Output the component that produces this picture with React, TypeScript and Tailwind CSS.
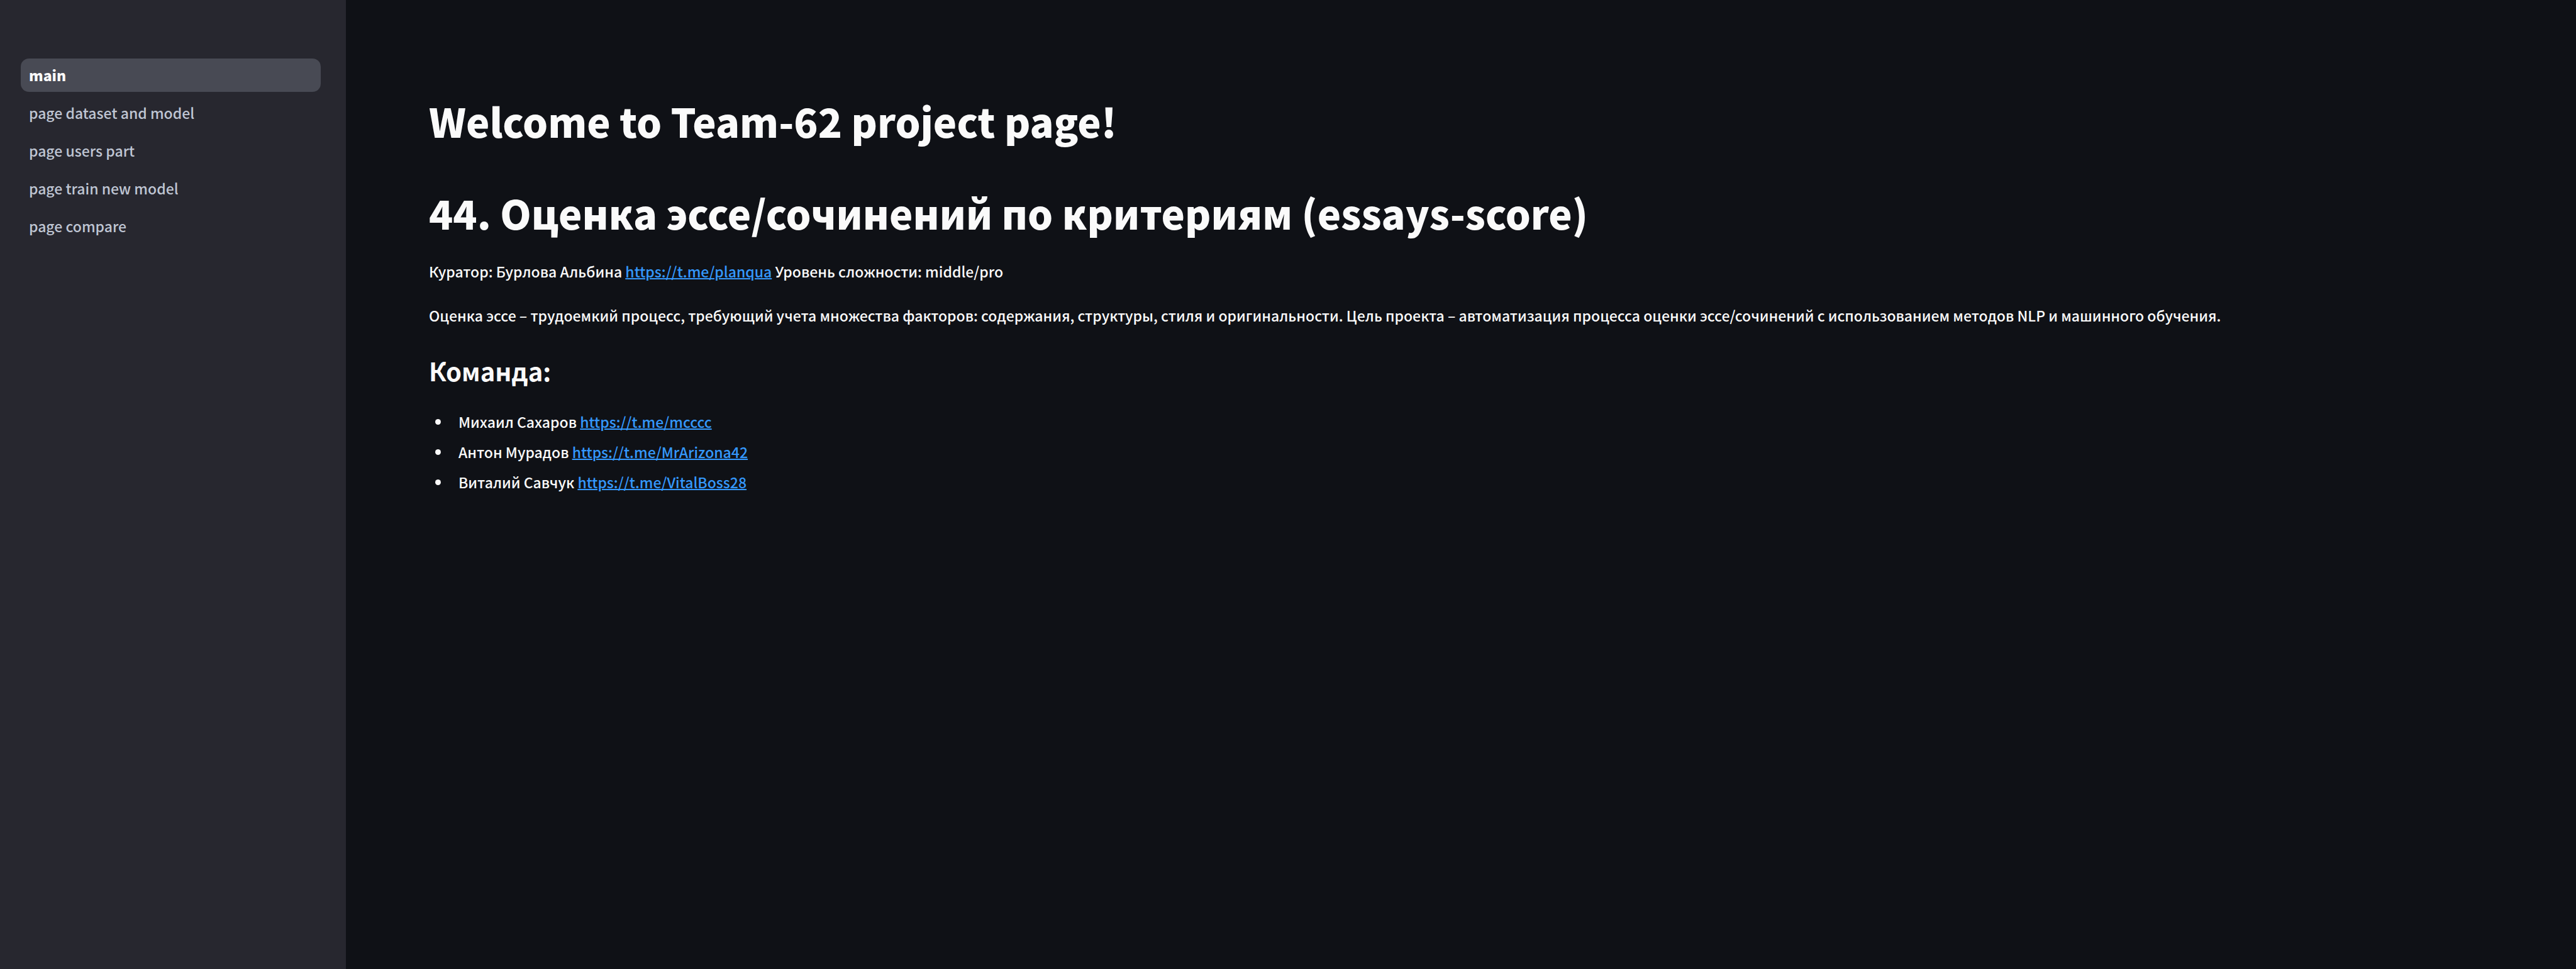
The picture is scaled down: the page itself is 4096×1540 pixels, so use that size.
const pages = [
  "main",
  "page dataset and model",
  "page users part",
  "page train new model",
  "page compare",
];

const team = [
  { name: "Михаил Сахаров", url: "https://t.me/mcccc" },
  { name: "Антон Мурадов", url: "https://t.me/MrArizona42" },
  { name: "Виталий Савчук", url: "https://t.me/VitalBoss28" },
];

function Sidebar() {
  return (
    <aside className="w-[550px] shrink-0 bg-[#27272f] pt-[93px] pr-10 pl-[33px]">
      <nav aria-label="Pages">
        <ul className="flex flex-col gap-[7px]">
          {pages.map((page, i) => (
            <li key={page}>
              <a
                href="#"
                aria-current={i === 0 ? "page" : undefined}
                className={
                  i === 0
                    ? "block rounded-[13px] bg-[#484a54] px-[13px] leading-[53px] font-black text-[#fafafa]"
                    : "block rounded-[13px] px-[13px] leading-[53px] text-[#bfc5d3]"
                }
              >
                {page}
              </a>
            </li>
          ))}
        </ul>
      </nav>
    </aside>
  );
}

function TextLink({ url }: { url: string }) {
  return (
    <a href={url} className="text-[#3498fd] underline decoration-2">
      {url}
    </a>
  );
}

export default function App() {
  return (
    <div className="flex min-h-screen bg-[#0f1116] font-['Noto_Sans_CJK_SC','Noto_Sans',sans-serif] text-[23px] font-medium text-[#fafafa]">
      <Sidebar />
      <main className="min-w-0 flex-1 px-[132px] pt-[153px]">
        <h1 className="text-[63px] leading-[78px] font-black">Welcome to Team-62 project page!</h1>
        <h1 className="mt-[68px] text-[63px] leading-[78px] font-black">
          44. Оценка эссе/сочинений по критериям (essays-score)
        </h1>
        <p className="mt-[34px] leading-[40px]">
          Куратор: Бурлова Альбина <TextLink url="https://t.me/planqua" /> Уровень сложности: middle/pro
        </p>
        <p className="mt-[30px] leading-[40px]">
          Оценка эссе – трудоемкий процесс, требующий учета множества факторов: содержания, структуры, стиля и
          оригинальности. Цель проекта – автоматизация процесса оценки эссе/сочинений с использованием методов NLP и
          машинного обучения.
        </p>
        <h2 className="mt-[44px] text-[40px] leading-[48px] font-bold">Команда:</h2>
        <ul className="mt-[33px] list-disc pl-[35px] leading-[48px]">
          {team.map(({ name, url }) => (
            <li key={name} className="pl-3">
              {name} <TextLink url={url} />
            </li>
          ))}
        </ul>
      </main>
    </div>
  );
}
